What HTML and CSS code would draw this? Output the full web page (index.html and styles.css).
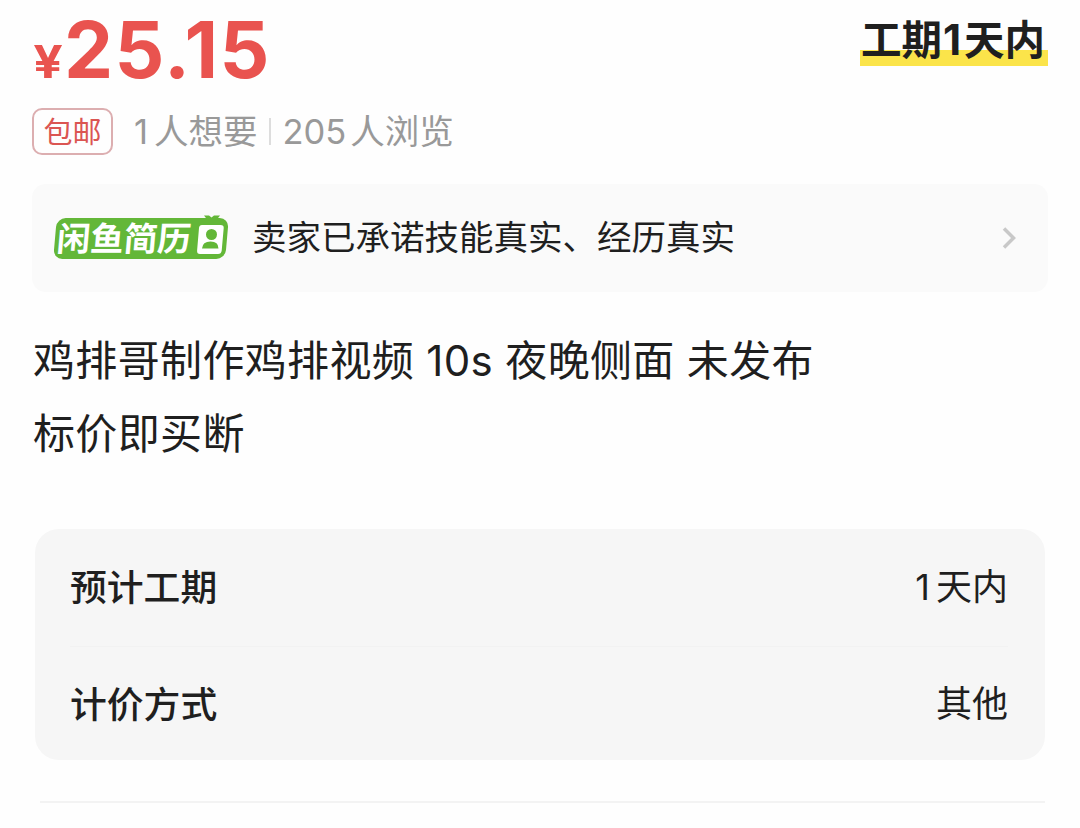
FILE: index.html
```
<!DOCTYPE html>
<html lang="zh-CN">
<head>
  <meta charset="UTF-8">
  <title>商品详情</title>
  <meta name="viewport" content="width=device-width, initial-scale=1.0">
  <link rel="stylesheet" href="styles.css">
</head>

<body>

<div class="page">
  <div class="header">
    <div class="price"><span class="yen">¥</span><span class="amount">25.15</span></div>
    <div class="deadline">工期<span class="num">1</span>天内</div>
  </div>

  <div class="stats">
    <span class="tag">包邮</span>
    <span class="want"><span class="num">1</span>人想要</span>
    <span class="sep"></span>
    <span class="views"><span class="num">205</span>人浏览</span>
  </div>

  <div class="promise">
    <div class="resume">
      <span class="resume-text">闲鱼简历</span>
      <svg class="resume-icon" width="32" height="44" viewBox="0 0 32 44">
        <path d="M8 1.500 H13 L15.500 3.500 L18 1.500 H24 L20.500 6 H11.500 Z" fill="#63b738"/>
        <path d="M6 11 H24.500 Q28 11 27.700 14 L25.700 36.500 Q25.300 40 22 40 H4 Q0.800 40 1.100 36.500 L3 14 Q3.300 11 6 11 Z" fill="#fff"/>
        <circle cx="15.500" cy="20.500" r="5.500" fill="#63b738"/>
        <path d="M6 34.500 Q6.500 27.500 14.500 27.500 Q22.500 27.500 22.500 34.500 Z" fill="#63b738"/>
      </svg>
    </div>
    <span class="promise-text">卖家已承诺技能真实、经历真实</span>
    <svg class="arrow" width="16" height="24" viewBox="0 0 16 24">
      <path d="M3 2.500 L12.500 12 L3 21.500" fill="none" stroke="#c8c8c8" stroke-width="3.500"/>
    </svg>
  </div>

  <div class="title">
    <p>鸡排哥制作鸡排视频 <span class="num">10s</span> 夜晚侧面 未发布</p>
    <p>标价即买断</p>
  </div>

  <div class="specs">
    <div class="row">
      <span class="label">预计工期</span>
      <span class="value"><span class="num">1</span>天内</span>
    </div>
    <div class="row">
      <span class="label">计价方式</span>
      <span class="value">其他</span>
    </div>
  </div>

  <div class="divider"></div>
</div>

</body>
</html>
```
FILE: styles.css
```
* {
  box-sizing: border-box;
}

body {
  margin: 0;
  background: #fefefe;
  color: #1f1f1f;
  font-family: Inter, "Noto Sans CJK SC", sans-serif;
}

.page {
  height: 828px;
  padding: 0 32px;
  overflow: hidden;
}

.header {
  display: flex;
  justify-content: space-between;
  align-items: flex-start;
  height: 108px;
}

.price {
  display: flex;
  align-items: baseline;
  padding-top: 2px;
  color: #e9534f;
  font-weight: 700;
  line-height: 96px;
}

.yen {
  width: 32px;
  padding-left: 1px;
  font-size: 45px;
  transform: scaleX(1.15);
  transform-origin: 0 50%;
}

.amount {
  font-size: 78px;
  letter-spacing: 1.4px;
}

.deadline {
  width: 188px;
  height: 47px;
  margin-top: 19px;
  padding-left: 1px;
  background: linear-gradient(#fbe44a, #fbe44a) 0 100% / 100% 16px no-repeat;
  font-family: "Noto Sans CJK SC", sans-serif;
  font-size: 40.500px;
  font-weight: 700;
  line-height: 38px;
  white-space: nowrap;
}

.deadline .num {
  display: inline-block;
  width: 22px;
  padding-left: 1px;
  font-family: Inter, sans-serif;
  font-size: 42px;
}

.stats {
  display: flex;
  align-items: center;
  height: 47px;
  color: #999;
  font-size: 34.500px;
  line-height: 50px;
  white-space: nowrap;
}

.tag {
  width: 81px;
  height: 47px;
  border: 2px solid #dcaeb0;
  border-radius: 10px;
  color: #db5552;
  font-size: 29px;
  line-height: 46px;
  text-align: center;
}

.want {
  margin-left: 21px;
}

.want .num {
  margin-right: 6px;
}

.sep {
  width: 2px;
  height: 27px;
  margin: 0 12px 0 11px;
  background: #ddd;
}

.views .num {
  margin-right: 4px;
}

.promise {
  display: flex;
  align-items: center;
  height: 108px;
  margin-top: 29px;
  padding: 0 31px 0 21px;
  border-radius: 14px;
  background: #fafafa;
}

.resume {
  position: relative;
  width: 176px;
  height: 41px;
  padding-left: 4px;
  color: #fff;
}

/* slanted green plate under the label */
.resume::before {
  content: "";
  position: absolute;
  inset: 0 2px 0 2px;
  border-radius: 9px;
  background: #63b738;
  transform: skewX(-5deg);
}

.resume-text {
  position: relative;
  display: block;
  font-size: 33.500px;
  font-weight: 700;
  line-height: 43px;
  white-space: nowrap;
  transform: skewX(-5deg);
}

.resume-icon {
  position: absolute;
  top: -4px;
  right: 1px;
}

.promise-text {
  margin-left: 23px;
  padding-bottom: 6px;
  font-size: 34.500px;
  white-space: nowrap;
}

.arrow {
  margin-left: auto;
}

.title {
  margin-top: 32px;
  padding-left: 1px;
  font-size: 42px;
  letter-spacing: 0.35px;
  line-height: 73px;
  white-space: nowrap;
}

.title p {
  margin: 0;
}

.specs {
  height: 231px;
  margin: 59px 3px 0;
  padding: 0 37px 0 35px;
  border-radius: 24px;
  background: #f6f6f6;
}

.row {
  display: flex;
  justify-content: space-between;
  height: 117px;
  font-size: 36px;
  line-height: 117px;
}

.row + .row {
  border-top: 1px solid #f2f2f2;
  line-height: 115px;
}

.value .num {
  margin-right: 6px;
}

.label {
  font-size: 36.800px;
  font-weight: 500;
}

.divider {
  height: 2px;
  margin: 41px 3px 0 8px;
  background: #f3f3f3;
}
```
